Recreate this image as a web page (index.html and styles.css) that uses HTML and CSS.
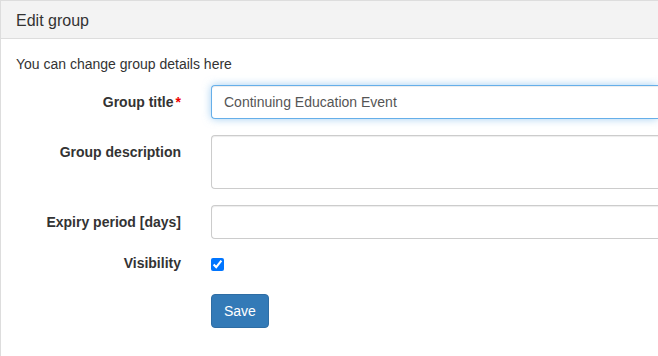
FILE: index.html
```html
<!DOCTYPE html>
<html lang="en">
<head>
  <meta charset="UTF-8" />
  <title>Edit group</title>
  <link rel="stylesheet" href="styles.css">
</head>
<body>

<!-- Edit group panel -->
<div class="panel">
  <div class="panel-heading">
    <h3 class="panel-title">Edit group</h3>
  </div>
  <div class="panel-body">
    <p class="intro">You can change group details here</p>

    <form class="form-horizontal">
      <div class="form-group">
        <label class="control-label" for="title">Group title<span class="required">*</span></label>
        <input id="title" class="form-control focused" type="text" value="Continuing Education Event">
      </div>

      <div class="form-group">
        <label class="control-label" for="description">Group description</label>
        <textarea id="description" class="form-control area"></textarea>
      </div>

      <div class="form-group">
        <label class="control-label" for="expiry">Expiry period [days]</label>
        <input id="expiry" class="form-control" type="text">
      </div>

      <div class="form-group check-row">
        <label class="control-label plain" for="visibility">Visibility</label>
        <div><input id="visibility" class="checkbox" type="checkbox" checked></div>
      </div>

      <div class="form-group">
        <span></span>
        <div><button type="button" class="btn">Save</button></div>
      </div>
    </form>
  </div>
</div>

</body>
</html>
```

FILE: styles.css
```css
* { box-sizing: border-box; }

body {
  margin: 0;
  background: #fff;
  color: #333;
  font-family: "Liberation Sans", Arial, sans-serif;
  font-size: 14px;
  line-height: 20px;
  overflow: hidden;
}

/* panel runs on past the right and bottom edge of the window */
.panel {
  border-top: 1px solid #ddd;
  border-left: 1px solid #ddd;
  height: 100vh;
}

.panel-heading {
  background: #f3f3f3;
  border-bottom: 1px solid #ddd;
  padding: 11px 15px 9px;
}

.panel-title {
  margin: 0;
  font-size: 16px;
  font-weight: normal;
  line-height: 17px;
  color: #333;
}

.panel-body {
  padding: 15px 0 15px 15px;
}

.intro {
  margin: 0 0 11px;
}

.form-group {
  display: grid;
  grid-template-columns: 165px 1fr;
  column-gap: 30px;
  margin-bottom: 16px;
}

.control-label {
  text-align: right;
  font-weight: bold;
  padding-top: 7px;
}

.control-label.plain {
  padding-top: 0;
}

.required {
  color: #e00;
  margin-left: 2px;
}

.form-control {
  display: block;
  width: 100%;
  height: 34px;
  padding: 6px 12px;
  font-family: inherit;
  font-size: 14px;
  line-height: 20px;
  color: #555;
  background: #fff;
  border: 1px solid #ccc;
  border-right: none;
  border-radius: 4px 0 0 4px;
  box-shadow: inset 0 1px 1px rgba(0, 0, 0, .075);
  outline: none;
  resize: none;
}

.form-control.focused {
  border-color: #66afe9;
  box-shadow: inset 0 1px 1px rgba(0, 0, 0, .075), 0 0 8px rgba(102, 175, 233, .6);
}

.form-control.area {
  height: 54px;
}

.check-row {
  margin-top: -2px;
  margin-bottom: 21px;
}

.checkbox {
  display: block;
  width: 13px;
  height: 13px;
  margin: 5px 0 0;
  accent-color: #0075ff;
}

.btn {
  display: inline-block;
  padding: 6px 12px;
  font-family: inherit;
  font-size: 14px;
  line-height: 20px;
  color: #fff;
  background: #337ab7;
  border: 1px solid #2e6da4;
  border-radius: 4px;
  cursor: pointer;
}
```
